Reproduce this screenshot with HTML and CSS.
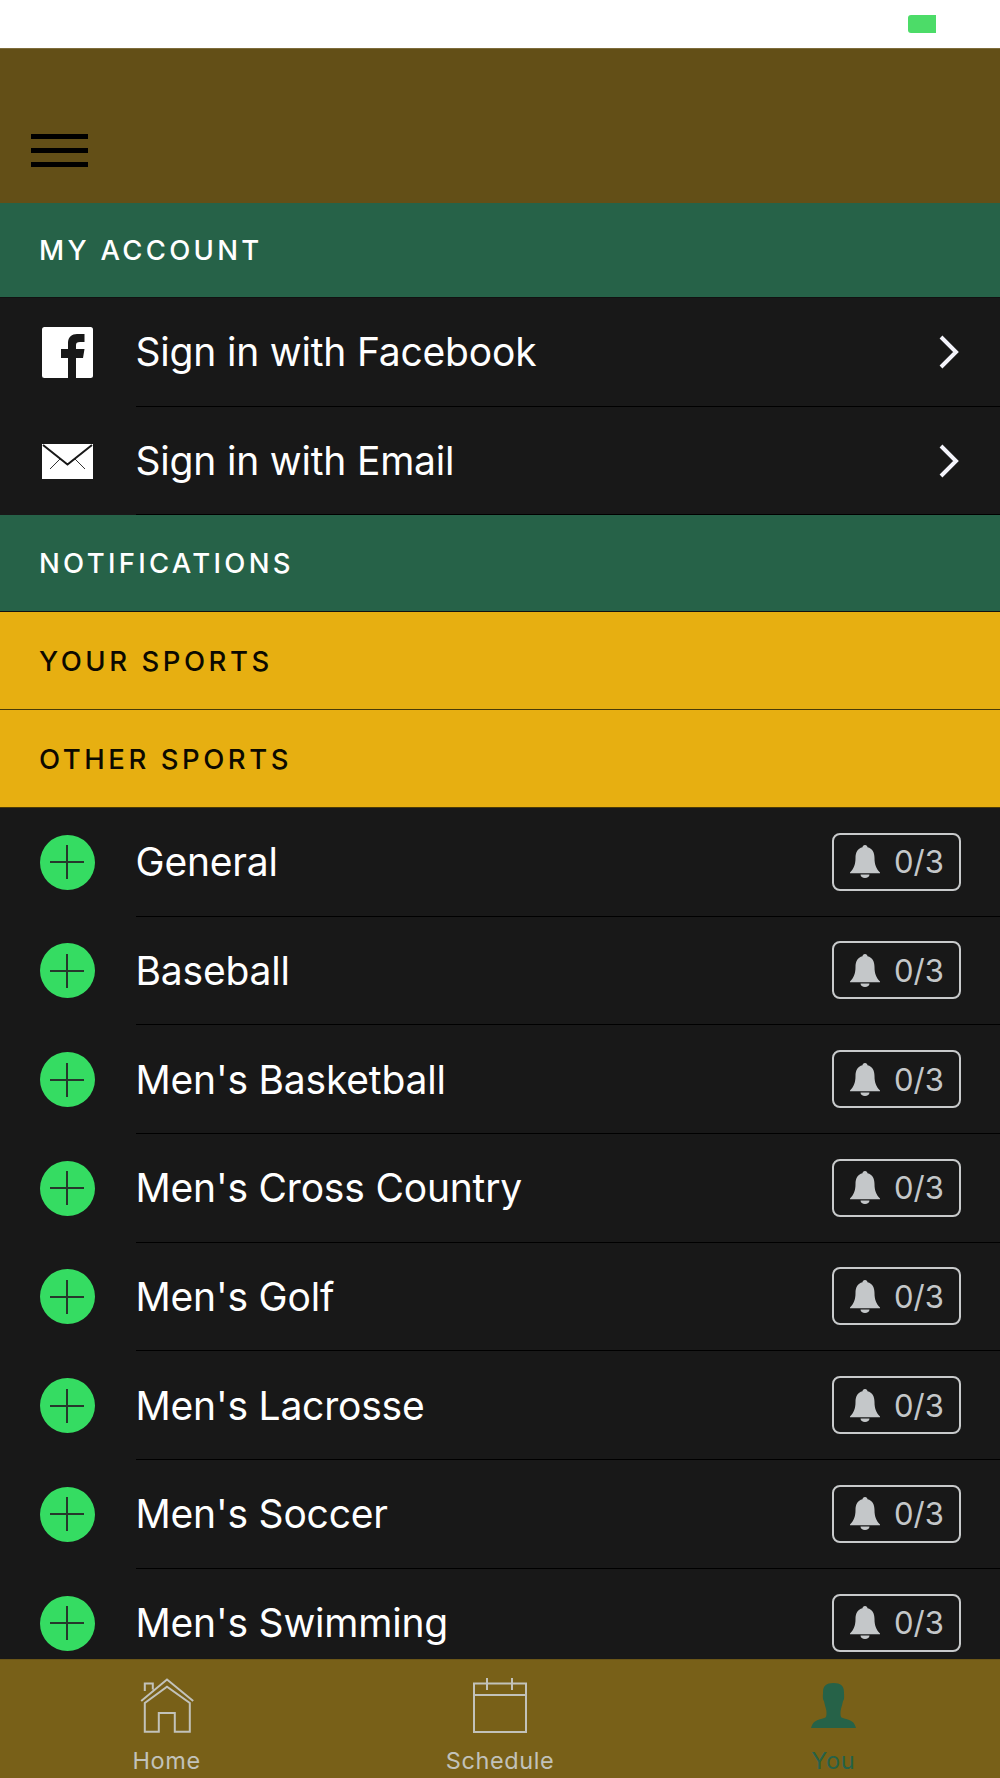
FILE: index.html
```html
<!DOCTYPE html>
<html lang="en">
<head>
    <meta charset="UTF-8">
    <meta name="viewport" content="width=device-width, initial-scale=1.0">
    <title>You</title>
    <link rel="stylesheet" href="styles.css">
</head>
<body>
    <svg class="defs" width="0" height="0">
        <symbol id="bell" viewBox="0 0 30 33">
            <path d="M15 0c1.500 0 2.500 1 2.500 2.300C22.500 3.500 24.500 7.500 24.500 13c0 6 1.500 10.500 5.500 14.500v.8H0v-.8C4 23.500 5.500 19 5.500 13c0-5.500 2-9.500 7-10.700C12.500 1 13.500 0 15 0zM10.500 29.500h9c0 2-2 3.500-4.500 3.500s-4.500-1.500-4.500-3.500z" fill="#c4c7c9"/>
        </symbol>
        <symbol id="chevron" viewBox="0 0 20 34">
            <path d="M2 2l15 15L2 32" fill="none" stroke="#f4f4fb" stroke-width="4"/>
        </symbol>
    </svg>

    <div class="status-bar"><div class="battery"></div></div>

    <header class="top-bar">
        <div class="hamburger"><span></span><span></span><span></span></div>
    </header>

    <main class="content">
        <div class="section section-green section-first">MY ACCOUNT</div>

        <div class="row">
            <div class="row-icon">
                <svg width="51" height="51" viewBox="0 0 51 51">
                    <rect width="51" height="51" rx="2.500" fill="#fff"/>
                    <path d="M26 51V31h-7v-9h7v-6c0-6 4-9 9-9h7.500v8H38c-3 0-4 1-4 3v4h8.500l-1.500 9h-7v20z" fill="#181818"/>
                </svg>
            </div>
            <div class="row-body">
                <span class="row-label">Sign in with Facebook</span>
                <svg class="chevron" width="20" height="34"><use href="#chevron"/></svg>
            </div>
        </div>
        <div class="row">
            <div class="row-icon">
                <svg width="51" height="35" viewBox="0 0 51 35">
                    <rect width="51" height="35" fill="#fff"/>
                    <path d="M1 1l24.500 19.500L50 1" fill="none" stroke="#181818" stroke-width="2"/>
                    <path d="M8 25l10-10M43 25L33 15" fill="none" stroke="#333" stroke-width="1"/>
                </svg>
            </div>
            <div class="row-body">
                <span class="row-label">Sign in with Email</span>
                <svg class="chevron" width="20" height="34"><use href="#chevron"/></svg>
            </div>
        </div>

        <div class="section section-green">NOTIFICATIONS</div>
        <div class="section section-yellow">YOUR SPORTS</div>
        <div class="section section-yellow">OTHER SPORTS</div>

        <div class="row">
            <div class="row-icon"><div class="add-btn"></div></div>
            <div class="row-body">
                <span class="row-label">General</span>
                <div class="badge"><svg width="30" height="33"><use href="#bell"/></svg><span>0/3</span></div>
            </div>
        </div>
        <div class="row">
            <div class="row-icon"><div class="add-btn"></div></div>
            <div class="row-body">
                <span class="row-label">Baseball</span>
                <div class="badge"><svg width="30" height="33"><use href="#bell"/></svg><span>0/3</span></div>
            </div>
        </div>
        <div class="row">
            <div class="row-icon"><div class="add-btn"></div></div>
            <div class="row-body">
                <span class="row-label">Men's Basketball</span>
                <div class="badge"><svg width="30" height="33"><use href="#bell"/></svg><span>0/3</span></div>
            </div>
        </div>
        <div class="row">
            <div class="row-icon"><div class="add-btn"></div></div>
            <div class="row-body">
                <span class="row-label">Men's Cross Country</span>
                <div class="badge"><svg width="30" height="33"><use href="#bell"/></svg><span>0/3</span></div>
            </div>
        </div>
        <div class="row">
            <div class="row-icon"><div class="add-btn"></div></div>
            <div class="row-body">
                <span class="row-label">Men's Golf</span>
                <div class="badge"><svg width="30" height="33"><use href="#bell"/></svg><span>0/3</span></div>
            </div>
        </div>
        <div class="row">
            <div class="row-icon"><div class="add-btn"></div></div>
            <div class="row-body">
                <span class="row-label">Men's Lacrosse</span>
                <div class="badge"><svg width="30" height="33"><use href="#bell"/></svg><span>0/3</span></div>
            </div>
        </div>
        <div class="row">
            <div class="row-icon"><div class="add-btn"></div></div>
            <div class="row-body">
                <span class="row-label">Men's Soccer</span>
                <div class="badge"><svg width="30" height="33"><use href="#bell"/></svg><span>0/3</span></div>
            </div>
        </div>
        <div class="row">
            <div class="row-icon"><div class="add-btn"></div></div>
            <div class="row-body">
                <span class="row-label">Men's Swimming</span>
                <div class="badge"><svg width="30" height="33"><use href="#bell"/></svg><span>0/3</span></div>
            </div>
        </div>
    </main>

    <nav class="tab-bar">
        <div class="tab">
            <svg width="56" height="56" viewBox="0 0 56 56">
                <path d="M2.200 23L28 1.500 54.200 23M5.800 13V5.500h8v6M5.800 25v28.700h14V35h16v18.700h15V25L28 8.700z" fill="none" stroke="#c2c2ba" stroke-width="2"/>
            </svg>
            <span>Home</span>
        </div>
        <div class="tab">
            <svg width="56" height="56" viewBox="0 0 56 56">
                <path d="M2 5.500h52V54H2zM2 17h52M15 0v12M40 0v12" fill="none" stroke="#c2c2ba" stroke-width="2"/>
            </svg>
            <span>Schedule</span>
        </div>
        <div class="tab tab-active">
            <svg class="tab-person" width="45" height="45" viewBox="0 0 56 56">
                <path d="M28 0c9 0 13 4 13 11 0 3 .5 6 0 9-.3 2-1.200 2-1.500 4-.5 3-1.800 6-2.500 10-.5 3-.5 8 1 9 4 2 10 2.500 13 5 3 2 4 5 5 8H0c1-3 2-6 5-8 3-2.500 9-3 13-5 1.500-1 1.500-6 1-9-.7-4-2-7-2.500-10-.3-2-1.200-2-1.500-4-.5-3 0-6 0-9C15 4 19 0 28 0z" fill="#266248"/>
            </svg>
            <span>You</span>
        </div>
    </nav>
</body>
</html>
```

FILE: styles.css
```css
* {
    box-sizing: border-box;
}
html, body {
    margin: 0;
    height: 1778px;
    overflow: hidden;
}
body {
    display: flex;
    flex-direction: column;
    font-family: Inter, "Liberation Sans", sans-serif;
    background: #181818;
}
.defs {
    position: absolute;
}
.status-bar {
    height: 48px;
    flex: none;
    background: #fff;
    padding: 15px 64px 0 0;
    display: flex;
    justify-content: flex-end;
}
.battery {
    width: 28px;
    height: 18px;
    background: #4cdc68;
    border-radius: 3px 0 0 3px;
}
.top-bar {
    height: 155px;
    flex: none;
    background: #634f17;
    border-top: 1px solid #7d6c3c;
    padding: 85px 0 0 31px;
}
.hamburger {
    width: 57px;
    display: flex;
    flex-direction: column;
    gap: 9px;
}
.hamburger span {
    height: 5px;
    background: #000;
}
.content {
    flex: 1;
    min-height: 0;
    overflow: hidden;
}
.section {
    height: 97px;
    display: flex;
    align-items: center;
    padding-left: 39px;
    font-size: 27.5px;
    font-weight: 500;
    letter-spacing: 3.3px;
    border-bottom: 1px solid #111;
}
.section-first {
    height: 95px;
}
.section-green {
    background: #266248;
    color: #fff;
}
.section-yellow {
    height: 98px;
    letter-spacing: 3.55px;
    background: #e7af11;
    color: #0c0900;
    border-bottom-color: #4a3a08;
}
.section-yellow + .section-yellow {
    height: 97.5px;
}
.row {
    height: 108.7px;
    display: flex;
    background: #181818;
}
.row-icon {
    width: 136px;
    flex: none;
    padding-left: 40px;
    display: flex;
    align-items: center;
}
.row-icon svg {
    margin-left: 2px;
    display: block;
}
.row-body {
    flex: 1;
    display: flex;
    align-items: center;
    justify-content: space-between;
    padding-right: 39px;
    border-bottom: 1px solid #000;
}
.row-label {
    font-size: 39px;
    letter-spacing: -.2px;
    margin-left: -.5px;
    color: #fff;
}
.chevron {
    display: block;
    margin-right: 2px;
}
.add-btn {
    width: 55px;
    height: 55px;
    margin-left: -.5px;
    border-radius: 50%;
    background: #35dc62 linear-gradient(#26382c, #26382c) center / 34px 2px no-repeat;
    position: relative;
}
.add-btn::after {
    content: "";
    position: absolute;
    left: 26.5px;
    top: 10.5px;
    width: 2px;
    height: 34px;
    background: #26382c;
}
.badge {
    width: 129px;
    height: 58px;
    border: 2px solid #c8cacb;
    border-radius: 8px;
    display: flex;
    align-items: center;
    gap: 14px;
    padding-left: 16px;
    color: #c4c7c9;
    font-size: 31px;
}
.badge svg {
    display: block;
}
.tab-bar {
    height: 119px;
    flex: none;
    background: #786018;
    border-top: 1px solid #6a5518;
    display: grid;
    grid-template-columns: repeat(3, 1fr);
}
.tab {
    display: flex;
    flex-direction: column;
    align-items: center;
    padding-top: 18px;
    color: #c2c2ba;
    font-size: 23.5px;
    letter-spacing: .6px;
    line-height: 30px;
}
.tab svg {
    display: block;
    margin-bottom: 12px;
}
.tab svg.tab-person {
    margin-top: 5px;
    margin-bottom: 18px;
}
.tab-active {
    color: #266248;
}
```
